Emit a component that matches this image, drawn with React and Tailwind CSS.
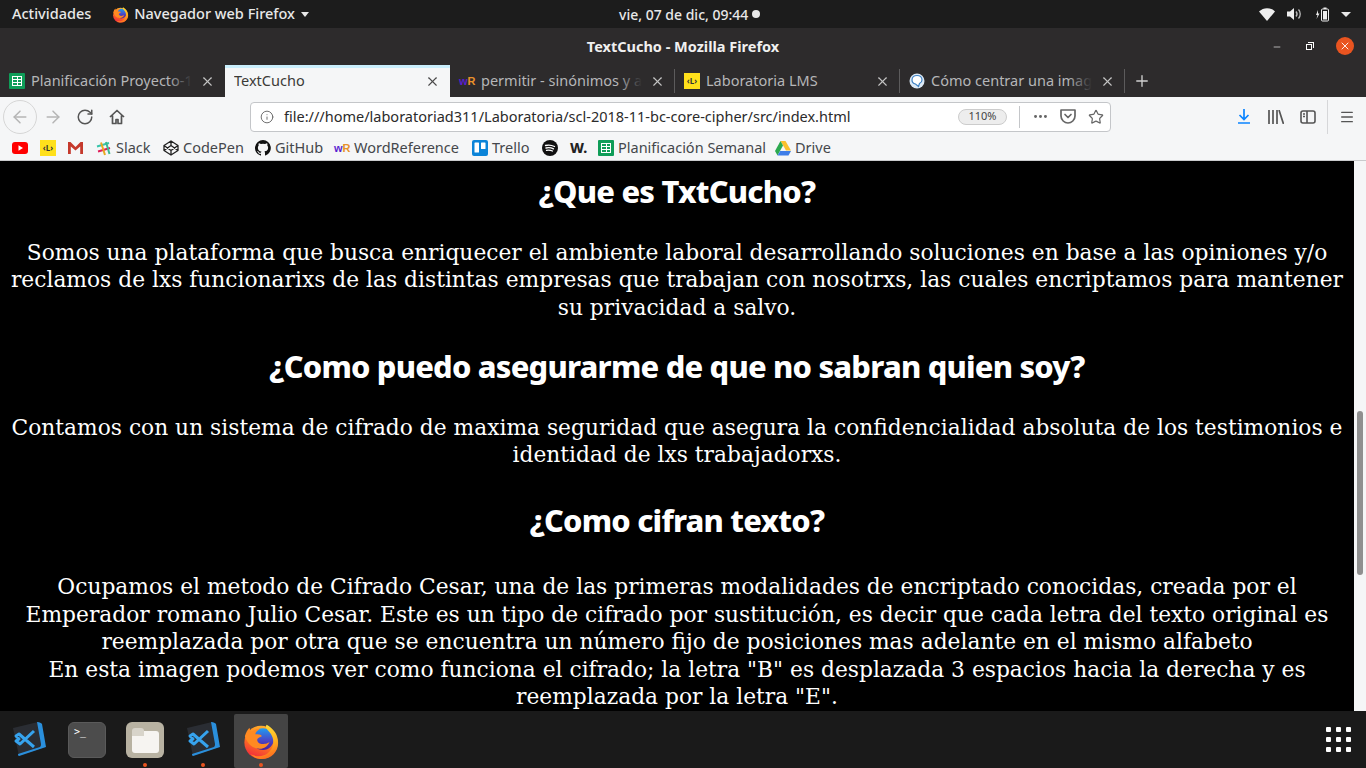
import React from "react";
import { X, Plus, ArrowLeft, ArrowRight, RotateCw, Info, MoreHorizontal, Star, Menu, Minus } from "lucide-react";

const ui = "font-['Noto_Sans',sans-serif]";
const heading = "text-[30.800px] font-extrabold leading-[42px] font-['Noto_Sans',sans-serif] tracking-[-0.78px]";

function FirefoxLogo({ size = 20, id = "fx" }) {
    return (
        <svg width={size} height={size} viewBox="0 0 40 40">
            <defs>
                <linearGradient id={`${id}a`} x1="0.7" y1="0" x2="0.3" y2="1">
                    <stop offset="0" stopColor="#ffb52e" />
                    <stop offset="0.5" stopColor="#ff7a1e" />
                    <stop offset="1" stopColor="#f0263f" />
                </linearGradient>
                <linearGradient id={`${id}b`} x1="0.5" y1="0" x2="0.5" y2="1">
                    <stop offset="0" stopColor="#1f9cf0" />
                    <stop offset="0.55" stopColor="#4a48c8" />
                    <stop offset="1" stopColor="#4a1f96" />
                </linearGradient>
                <linearGradient id={`${id}c`} x1="0.3" y1="0" x2="0.6" y2="1">
                    <stop offset="0" stopColor="#ffe23a" />
                    <stop offset="0.6" stopColor="#ffb01f" />
                    <stop offset="1" stopColor="#ff6a1f" />
                </linearGradient>
            </defs>
            <circle cx="20" cy="21.500" r="17.500" fill={`url(#${id}a)`} />
            <circle cx="22" cy="18" r="11.500" fill={`url(#${id}b)`} />
            <path d="M3 15c1-4 3-7 5-9 0 2 1 3 2 4 3-2 6-3 9-3-3 2-5 4-5 6 3 0 6 0 7 2-2 1-5 2-5 4 0 3 4 5 8 4 2 0 3-1 5-2-2 5-7 8-12 7C10 27 6 23 3 15z" fill="#ff8a22" />
            <path d="M26 3c7 4 12 10 12 19 0 9-7 17-17 17-5 0-9-2-12-5 4 2 9 3 14 1 6-2 10-8 10-14 0-7-4-10-7-14-1-1-1-3 0-4z" fill={`url(#${id}c)`} />
        </svg>
    );
}

function VsCode() {
    return (
        <svg width="36" height="38" viewBox="0 0 36 38" fill="none">
            <path d="M2 7 27 1l7 25-26 9z" fill="#2a2d33" />
            <path d="M26 1c3 0 4 1 5 2l4 23-27 9c-1 0-1-2-1-2l22-7c1-1 1-2 1-3z" fill="#2a8fdc" />
            <path d="M23 10 9 23l-4-3 3-2-3-3 3-2 15 13" stroke="#36a3ee" strokeWidth="3" strokeLinejoin="round" />
        </svg>
    );
}

function SheetIcon() {
    return (
        <span className="flex size-4 items-center justify-center rounded-[1px] bg-[#0f9d58]">
            <span className="grid h-[10px] w-[10px] grid-cols-2 gap-[1px] border border-white bg-white">
                <span className="bg-[#0f9d58]" /><span className="bg-[#0f9d58]" />
                <span className="bg-[#0f9d58]" /><span className="bg-[#0f9d58]" />
                <span className="bg-[#0f9d58]" /><span className="bg-[#0f9d58]" />
            </span>
        </span>
    );
}

function LabIcon() {
    return (
        <span className="flex size-4 items-center justify-center bg-[#ffe01b] text-[8px] font-bold text-[#333]">‹L›</span>
    );
}

function WrIcon() {
    return (
        <span className="flex w-4 items-center text-[11px] font-bold leading-none font-['Liberation_Sans',sans-serif]">
            <span className="text-[#5a1fd0]">w</span><span className="text-[#e8912b]">R</span>
        </span>
    );
}

function Tab({ icon, label, active, fade, divider }) {
    return (
        <div className={`relative flex h-full w-[225px] items-center pl-[9px] pr-[10px] ${active ? "border-t-[3px] border-[#c9eefc] bg-[#f5f6f7] pb-[3px] text-[#3c3b37]" : "text-[#b5b6b8]"}`}>
            {icon && <span className="mr-[6px] flex w-4 shrink-0 justify-center">{icon}</span>}
            <span className="relative mr-[8px] min-w-0 flex-1 overflow-hidden whitespace-nowrap text-[14.500px]">
                {label}
                {fade && <span className="absolute inset-y-0 right-0 w-6 bg-gradient-to-r from-transparent to-[#2d2b2c]" />}
            </span>
            <X size={15} strokeWidth={1.800} className={`shrink-0 ${active ? "text-[#4a4a4a]" : "text-[#c4c4c4]"}`} />
            {divider && <span className="absolute right-0 top-[4px] h-6 w-px bg-[#5c5b5c]" />}
        </div>
    );
}

function Bookmark({ icon, label, className = "" }) {
    return (
        <div className={`flex items-center gap-[4px] ${className}`}>
            {icon}
            {label && <span>{label}</span>}
        </div>
    );
}

const bookmarks = [
    {
        icon: (
            <svg width="16" height="12" viewBox="0 0 16 12"><rect width="16" height="12" rx="3" fill="#f00" /><path d="M6.500 3.200 11 6l-4.500 2.800z" fill="#fff" /></svg>
        ),
        className: "w-[28px]",
    },
    { icon: <LabIcon />, className: "w-[28px]" },
    {
        icon: (
            <svg width="15" height="12" viewBox="0 0 15 12"><path d="M0 0h2.500L7.500 5 12.500 0H15v12h-2.800V4.500L7.500 8.500 2.800 4.500V12H0z" fill="#c5392c" /></svg>
        ),
        className: "w-[28px]",
    },
    {
        icon: (
            <svg className="mr-[1px]" width="15" height="15" viewBox="0 0 15 15">
                <path d="M1 5.500 13 2" stroke="#36c5ab" strokeWidth="2" />
                <path d="M2 10.500 14 7" stroke="#e01e5a" strokeWidth="2" />
                <path d="M5 1.500 9 14" stroke="#e9a820" strokeWidth="2" />
                <path d="M10 1 13.500 13" stroke="#3eb890" strokeWidth="2" />
            </svg>
        ),
        label: "Slack",
        className: "w-[67px]",
    },
    {
        icon: (
            <svg width="16" height="16" viewBox="0 0 16 16" fill="none" stroke="#222" strokeWidth="1.300" strokeLinejoin="round">
                <path d="M8 1 15 5.500v5L8 15 1 10.500v-5zM8 1v4.500M8 15v-4.500M1 5.500l7 5 7-5M1 10.500l7-5 7 5" />
            </svg>
        ),
        label: "CodePen",
        className: "w-[92px]",
    },
    {
        icon: (
            <svg width="16" height="16" viewBox="0 0 16 16" fill="#111"><path d="M8 0a8 8 0 0 0-2.500 15.600c.4.100.5-.2.500-.4v-1.400c-2.200.5-2.700-1-2.700-1-.4-.9-.9-1.200-.9-1.200-.7-.5.100-.5.100-.5.800.1 1.200.8 1.200.8.700 1.200 1.900.9 2.300.7.100-.5.300-.9.500-1.100-1.800-.2-3.600-.9-3.600-4 0-.9.300-1.600.8-2.100-.1-.2-.4-1 .1-2.100 0 0 .7-.2 2.200.8a7.600 7.600 0 0 1 4 0c1.500-1 2.200-.8 2.200-.8.400 1.100.2 1.900.1 2.100.5.600.8 1.300.8 2.100 0 3.100-1.900 3.700-3.700 3.900.3.300.6.800.6 1.500v2.200c0 .2.100.5.600.4A8 8 0 0 0 8 0z" /></svg>
        ),
        label: "GitHub",
        className: "w-[79px]",
    },
    { icon: <WrIcon />, label: "WordReference", className: "w-[138px]" },
    {
        icon: (
            <svg width="16" height="16" viewBox="0 0 16 16"><rect width="16" height="16" rx="2" fill="#0b84d8" /><rect x="2.500" y="2.500" width="4.500" height="10" rx=".6" fill="#fff" /><rect x="9" y="2.500" width="4.500" height="6.500" rx=".6" fill="#fff" /></svg>
        ),
        label: "Trello",
        className: "w-[70px]",
    },
    {
        icon: (
            <svg width="16" height="16" viewBox="0 0 16 16" fill="none"><circle cx="8" cy="8" r="8" fill="#111" /><path d="M3.500 5.500c3-.8 6-.5 9 1M4 8c2.500-.6 5-.4 7.500.9M4.500 10.300c2-.5 4-.3 6 .7" stroke="#fff" strokeWidth="1.300" strokeLinecap="round" /></svg>
        ),
        className: "w-[28px]",
    },
    { icon: <span className="w-4 text-[14px] font-extrabold leading-none text-[#222]">W.</span>, className: "w-[28px]" },
    { icon: <SheetIcon />, label: "Planificación Semanal", className: "w-[177px]" },
    {
        icon: (
            <svg width="16" height="15" viewBox="0 0 16 15"><path d="M5.500 0h5L16 9.500h-5z" fill="#fbc02d" /><path d="M5.500 0 8 4.500 2.500 14.500 0 10z" fill="#2da94f" /><path d="M5.200 10H16l-2.500 4.500H2.500z" fill="#3f7ee8" /></svg>
        ),
        label: "Drive",
    },
];

function DockDot() {
    return <span className="absolute bottom-[1px] left-1/2 size-[4px] -translate-x-1/2 rounded-full bg-[#e95420]" />;
}

export default function App() {
    return (
        <div className={`flex h-[768px] w-[1366px] flex-col overflow-hidden bg-black ${ui}`}>
            {/* barra de gnome */}
            <div className="relative flex h-[28px] shrink-0 items-center justify-between bg-[#1c1c1c] text-[14px] font-medium text-[#e8e8e8]">
                <div className="flex items-center text-[14.500px]">
                    <span className="ml-[12px]">Actividades</span>
                    <span className="ml-[21px]"><FirefoxLogo size={17} id="top" /></span>
                    <span className="ml-[5px]">Navegador web Firefox</span>
                    <span className="ml-[6px] h-0 w-0 border-x-[4.500px] border-t-[5px] border-x-transparent border-t-[#e8e8e8]" />
                </div>
                <div className="absolute left-[619px] flex items-center gap-[4px]">
                    <span>vie, 07 de dic, 09:44</span>
                    <span className="size-[8px] rounded-full bg-[#e8e8e8]" />
                </div>
                <div className="mr-[15px] flex items-center text-[#e8e8e8]">
                    <svg width="16" height="13" viewBox="0 0 16 13"><path d="M0 3.500C4.500-1 11.500-1 16 3.500L8 13z" fill="#eee" /></svg>
                    <svg className="ml-[12px]" width="16" height="14" viewBox="0 0 16 14" fill="none"><path d="M0 4.500h3L7 1v12L3 9.500H0z" fill="#eee" /><path d="M9 4.500c1.300 1.500 1.300 3.500 0 5M11.500 2.500c2.300 2.500 2.300 6.500 0 9" stroke="#bbb" strokeWidth="1.300" /></svg>
                    <svg className="ml-[12px]" width="15" height="15" viewBox="0 0 15 15" fill="none"><path d="M3 3 1 8h1.500L1.500 12 4.500 6.500H3z" fill="#eee" /><rect x="6.500" y="2" width="7" height="12" rx="1" stroke="#eee" /><rect x="8" y="4" width="4" height="8.500" fill="#eee" /><rect x="8.500" y="0.500" width="3" height="1.500" fill="#eee" /></svg>
                    <span className="ml-[11px] h-0 w-0 border-x-[5px] border-t-[5px] border-x-transparent border-t-[#e8e8e8]" />
                </div>
            </div>

            {/* titulo de ventana */}
            <div className="relative flex h-[37px] shrink-0 items-center justify-center bg-[#2d2b2c] text-[14.500px] font-bold text-[#f0f0f0]">
                TextCucho - Mozilla Firefox
                <div className="absolute right-[12px] top-[9px] flex items-center">
                    <Minus size={10} strokeWidth={1.500} className="mr-[24px] mt-[2px] text-white" />
                    <span className="relative mr-[22px] size-[8px]">
                        <span className="absolute bottom-0 left-0 size-[6px] border border-white" />
                        <span className="absolute right-0 top-0 h-[6px] w-[6px] border-r border-t border-white" />
                    </span>
                    <span className="flex size-[18px] items-center justify-center rounded-full bg-[#e95420]">
                        <X size={12} strokeWidth={1.800} className="text-white" />
                    </span>
                </div>
            </div>

            {/* pestañas */}
            <div className="flex h-[32px] shrink-0 items-center bg-[#2d2b2c]">
                <Tab icon={<SheetIcon />} label="Planificación Proyecto-1" fade />
                <Tab label="TextCucho" active />
                <Tab icon={<WrIcon />} label="permitir - sinónimos y an" fade divider />
                <Tab icon={<LabIcon />} label="Laboratoria LMS" divider />
                <Tab
                    icon={
                        <svg width="16" height="16" viewBox="0 0 16 16" fill="none"><circle cx="8" cy="8" r="7.500" fill="#dbe9f6" /><path d="M8 2.500c-3 0-5 2-5 4.500 0 2 1.500 3.500 3.500 4l3 2.500 1-3c1.500-.8 2.500-2 2.500-3.500 0-2.500-2-4.500-5-4.500z" fill="#fff" stroke="#3f82c4" strokeWidth="1.200" /></svg>
                    }
                    label="Cómo centrar una image"
                    fade
                    divider
                />
                <Plus size={18} strokeWidth={1.800} className="ml-[8px] text-[#d0d0d0]" />
            </div>

            {/* barra de navegacion */}
            <div className="flex h-[39px] shrink-0 items-center bg-[#f5f6f7] text-[#5a5a5a]">
                <span className="ml-[3px] flex size-[34px] items-center justify-center rounded-full border border-[#d6d6d6]">
                    <ArrowLeft size={20} strokeWidth={1.800} className="text-[#b5b5b5]" />
                </span>
                <ArrowRight size={20} strokeWidth={1.800} className="ml-[6px] text-[#b5b5b5]" />
                <RotateCw size={18} strokeWidth={2} className="ml-[13px] text-[#555]" />
                <svg className="ml-[15px]" width="16" height="16" viewBox="0 0 16 16" fill="none" stroke="#555" strokeWidth="1.700" strokeLinejoin="round">
                    <path d="M1 8 8 1.500 15 8M3.500 6.500V14.500H7v-4h2v4h3.500V6.500" />
                </svg>
                <div className="ml-[125px] flex h-[30px] w-[861px] items-center rounded-[4px] border border-[#c4c6c9] bg-white text-[14.500px] text-[#2b2b2b]">
                    <Info size={14} strokeWidth={1.600} className="ml-[9px] text-[#666]" />
                    <span className="ml-[10px] whitespace-nowrap">file:///home/laboratoriad311/Laboratoria/scl-2018-11-bc-core-cipher/src/index.html</span>
                    <span className="ml-auto flex h-[16px] w-[49px] items-center justify-center rounded-full border border-[#ccc] bg-[#ededed] text-[11px] text-[#444]">110%</span>
                    <span className="ml-[12px] h-[22px] w-px bg-[#c4c6c9]" />
                    <MoreHorizontal size={17} strokeWidth={2.200} className="ml-[12px] text-[#666]" />
                    <svg className="ml-[11px]" width="16" height="15" viewBox="0 0 16 15" fill="none" stroke="#666" strokeWidth="1.700" strokeLinejoin="round"><path d="M1 1h14v6c0 4-3.500 7-7 7s-7-3-7-7z" /><path d="M5 5.500 8 8.500 11 5.500" strokeLinecap="round" /></svg>
                    <Star size={16} strokeWidth={1.800} className="ml-[12px] mr-[6px] text-[#666]" />
                </div>
                <svg className="ml-[126px]" width="14" height="15" viewBox="0 0 14 15" fill="none" stroke="#0a84ff" strokeWidth="1.700"><path d="M7 0v10M2.500 6 7 10.500 11.500 6M1 14h12" /></svg>
                <svg className="ml-[17px]" width="16" height="14" viewBox="0 0 16 14" fill="none" stroke="#555" strokeWidth="1.700"><path d="M1 0v14M5 0v14M9 0v14M11 0l4.500 14" /></svg>
                <svg className="ml-[16px]" width="16" height="14" viewBox="0 0 16 14" fill="none" stroke="#555" strokeWidth="1.600"><rect x="1" y="1" width="14" height="12" rx="2" /><path d="M7 1v12M3 4h2M3 6.500h2" /></svg>
                <span className="ml-[11px] h-[34px] w-px bg-[#d6d7d9]" />
                <Menu size={16} strokeWidth={2} className="ml-[11px] text-[#555]" />
            </div>

            {/* marcadores */}
            <div className="flex h-[25px] shrink-0 items-center border-b border-[#c9cacc] bg-[#f5f6f7] pl-[12px] text-[14.500px] text-[#44474b]">
                {bookmarks.map((b, i) => (
                    <Bookmark key={i} icon={b.icon} label={b.label} className={b.className} />
                ))}
            </div>

            {/* contenido */}
            <div className="flex min-h-0 flex-1">
                <div className="min-w-0 flex-1 overflow-hidden bg-black pt-[9px] text-center font-['DejaVu_Serif',serif] text-[21.770px] leading-[27.500px] text-white">
                    <h2 className={heading}>¿Que es TxtCucho?</h2>
                    <p className="mt-[26.500px]">Somos una plataforma que busca enriquecer el ambiente laboral desarrollando soluciones en base a las opiniones y/o reclamos de lxs funcionarixs de las distintas empresas que trabajan con nosotrxs, las cuales encriptamos para mantener su privacidad a salvo.</p>
                    <h2 className={`mt-[23.500px] ${heading}`}>¿Como puedo asegurarme de que no sabran quien soy?</h2>
                    <p className="mt-[27px]">Contamos con un sistema de cifrado de maxima seguridad que asegura la confidencialidad absoluta de los testimonios e identidad de lxs trabajadorxs.</p>
                    <h2 className={`mt-[30px] ${heading}`}>¿Como cifran texto?</h2>
                    <p className="mt-[32.500px]">Ocupamos el metodo de Cifrado Cesar, una de las primeras modalidades de encriptado conocidas, creada por el Emperador romano Julio Cesar. Este es un tipo de cifrado por sustitución, es decir que cada letra del texto original es reemplazada por otra que se encuentra un número fijo de posiciones mas adelante en el mismo alfabeto</p>
                    <p>En esta imagen podemos ver como funciona el cifrado; la letra "B" es desplazada 3 espacios hacia la derecha y es reemplazada por la letra "E".</p>
                </div>
                <div className="w-[12px] shrink-0 bg-[#f5f6f7] pl-[3px] pt-[250px]">
                    <div className="h-[164px] w-[6px] rounded-full bg-[#8f8f8f]" />
                </div>
            </div>

            {/* dock */}
            <div className="flex h-[57px] shrink-0 items-center bg-[#1a1a1a]">
                <div className="flex h-full w-[58px] items-center justify-center"><VsCode /></div>
                <div className="flex h-full w-[58px] items-center justify-center">
                    <span className="h-[36px] w-[38px] rounded-[6px] border border-[#5a5a5a] bg-[#4c4c4c] pl-[5px] pt-[2px] font-['DejaVu_Sans_Mono',monospace] text-[10px] leading-[14px] text-white">&gt;_</span>
                </div>
                <div className="relative flex h-full w-[58px] items-center justify-center">
                    <span className="relative flex h-[36px] w-[38px] items-center justify-center rounded-[6px] bg-[#b8b2a2]">
                        <span className="absolute left-[6px] top-[6px] h-[8px] w-[12px] rounded-t-[3px] bg-[#d8d4ca]" />
                        <span className="mt-[4px] h-[22px] w-[27px] rounded-[3px] bg-[#f6f4f1]" />
                    </span>
                    <DockDot />
                </div>
                <div className="relative flex h-full w-[58px] items-center justify-center"><VsCode /><DockDot /></div>
                <div className="relative ml-[2px] mt-[3px] flex h-[54px] w-[54px] items-center justify-center rounded-[2px] bg-[#444]">
                    <FirefoxLogo size={38} id="dock" />
                    <DockDot />
                </div>
                <div className="ml-auto mr-[15px] grid grid-cols-3 gap-[5px]">
                    {Array.from({ length: 9 }).map((_, i) => (
                        <span key={i} className="size-[5px] rounded-[1px] bg-white" />
                    ))}
                </div>
            </div>
        </div>
    );
}
